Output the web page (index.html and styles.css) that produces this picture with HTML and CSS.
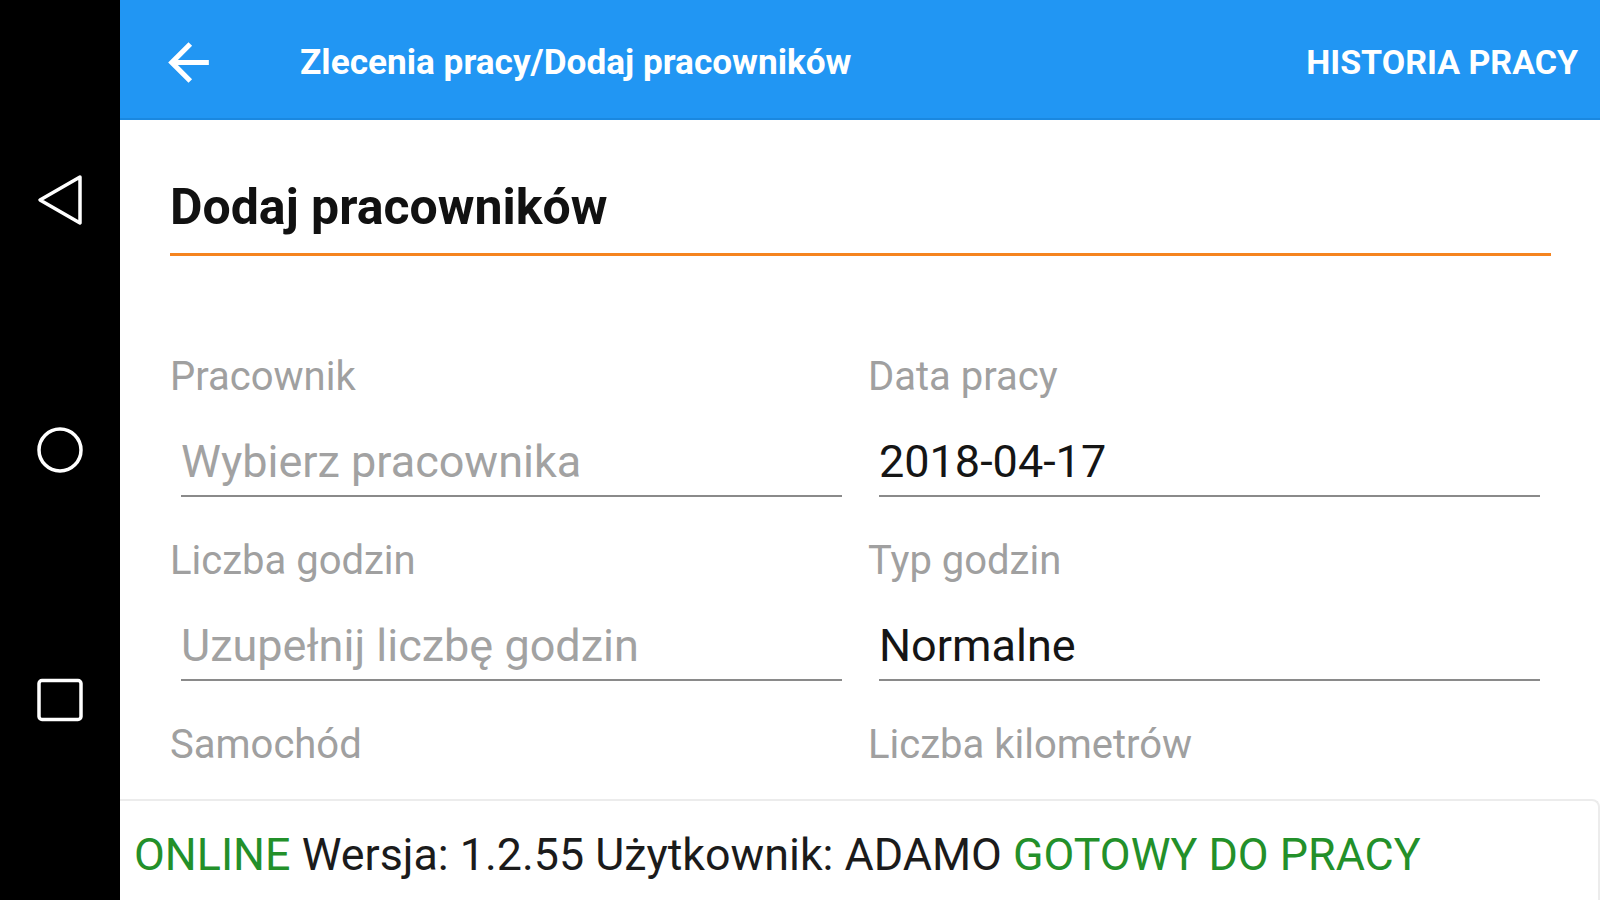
FILE: index.html
```html
<!DOCTYPE html>
<html lang="pl">
<head>
<meta charset="utf-8">
<title>Dodaj pracowników</title>
<link rel="stylesheet" href="styles.css">
</head>
<body>
<div class="screen">
  <nav class="navbar">
    <svg class="nav-icon" viewBox="0 0 56 56" width="56" height="56"><polygon points="48,5 8,28 48,51" /></svg>
    <svg class="nav-icon" viewBox="0 0 56 56" width="56" height="56"><circle cx="28" cy="28" r="21" /></svg>
    <svg class="nav-icon" viewBox="0 0 56 56" width="56" height="56"><rect x="7" y="8.5" width="42" height="39" rx="3" /></svg>
  </nav>
  <div class="app">
    <header class="toolbar">
      <svg class="back" viewBox="0 0 24 24" width="61" height="61"><path d="M20 11H7.83l5.59-5.59L12 4l-8 8 8 8 1.41-1.41L7.83 13H20v-2z"/></svg>
      <div class="toolbar-title">Zlecenia pracy/Dodaj pracowników</div>
      <div class="toolbar-action">HISTORIA PRACY</div>
    </header>
    <main class="content">
      <h1 class="page-title">Dodaj pracowników</h1>
      <div class="form">
        <div class="field">
          <div class="label">Pracownik</div>
          <div class="input placeholder">Wybierz pracownika</div>
        </div>
        <div class="field">
          <div class="label">Data pracy</div>
          <div class="input">2018-04-17</div>
        </div>
        <div class="field">
          <div class="label">Liczba godzin</div>
          <div class="input placeholder">Uzupełnij liczbę godzin</div>
        </div>
        <div class="field">
          <div class="label">Typ godzin</div>
          <div class="input">Normalne</div>
        </div>
        <div class="field">
          <div class="label">Samochód</div>
        </div>
        <div class="field">
          <div class="label">Liczba kilometrów</div>
        </div>
      </div>
    </main>
    <footer class="status">
      <span class="green">ONLINE</span> Wersja: 1.2.55 Użytkownik: ADAMO <span class="green">GOTOWY DO PRACY</span>
    </footer>
  </div>
</div>
</body>
</html>
```
FILE: styles.css
```css
* { box-sizing: border-box; }
html, body {
  margin: 0;
  padding: 0;
  width: 1600px;
  height: 900px;
  overflow: hidden;
  background: #fff;
  font-family: Roboto, "Liberation Sans", sans-serif;
}
.screen {
  display: flex;
  width: 1600px;
  height: 900px;
}
.navbar {
  width: 120px;
  flex: none;
  background: #000;
  display: flex;
  flex-direction: column;
  align-items: center;
  justify-content: center;
  gap: 194px;
}
.nav-icon {
  display: block;
  overflow: visible;
  fill: none;
  stroke: #fff;
  stroke-width: 3.5;
  stroke-linejoin: round;
}
.app {
  flex: 1;
  display: flex;
  flex-direction: column;
  min-width: 0;
  background: #fff;
}
.toolbar {
  height: 118px;
  flex: none;
  background: #2196f3;
  display: flex;
  align-items: center;
  padding: 6px 22px 0 38px;
  color: #fff;
  box-shadow: 0 2px 0 #1a88e0;
  position: relative;
  z-index: 1;
}
.back {
  display: block;
  fill: #fff;
  flex: none;
}
.toolbar-title {
  margin-left: 81px;
  font-size: 35.2px;
  font-weight: 700;
  flex: 1;
  white-space: nowrap;
}
.toolbar-action {
  font-size: 34px;
  font-weight: 700;
  white-space: nowrap;
}
.content {
  flex: 1;
  overflow: hidden;
  padding: 59px 49px 0 50px;
}
.page-title {
  margin: 0;
  font-size: 50px;
  line-height: 60px;
  font-weight: 700;
  color: #111;
  padding-bottom: 16px;
  border-bottom: 3px solid #f5841f;
}
.form {
  margin-top: 96px;
  display: grid;
  grid-template-columns: 1fr 1fr;
  column-gap: 15px;
}
.field {
  margin-bottom: 39px;
}
.label {
  font-size: 40px;
  line-height: 50px;
  color: #a0a0a0;
  white-space: nowrap;
}
.input {
  margin: 0 11px;
  padding: 32px 0 5px 0;
  font-size: 45px;
  line-height: 56px;
  color: #151515;
  border-bottom: 2px solid #8a8a8a;
  white-space: nowrap;
}
.input.placeholder {
  color: #a2a2a2;
}
.status {
  height: 101px;
  flex: none;
  padding: 29px 0 0 14px;
  border-top: 2px solid #ececec;
  border-right: 2px solid #ececec;
  border-top-right-radius: 8px;
  font-size: 44.8px;
  line-height: 50px;
  color: #1b1b1b;
  white-space: nowrap;
  background: #fff;
}
.green {
  color: #23902a;
}
```
